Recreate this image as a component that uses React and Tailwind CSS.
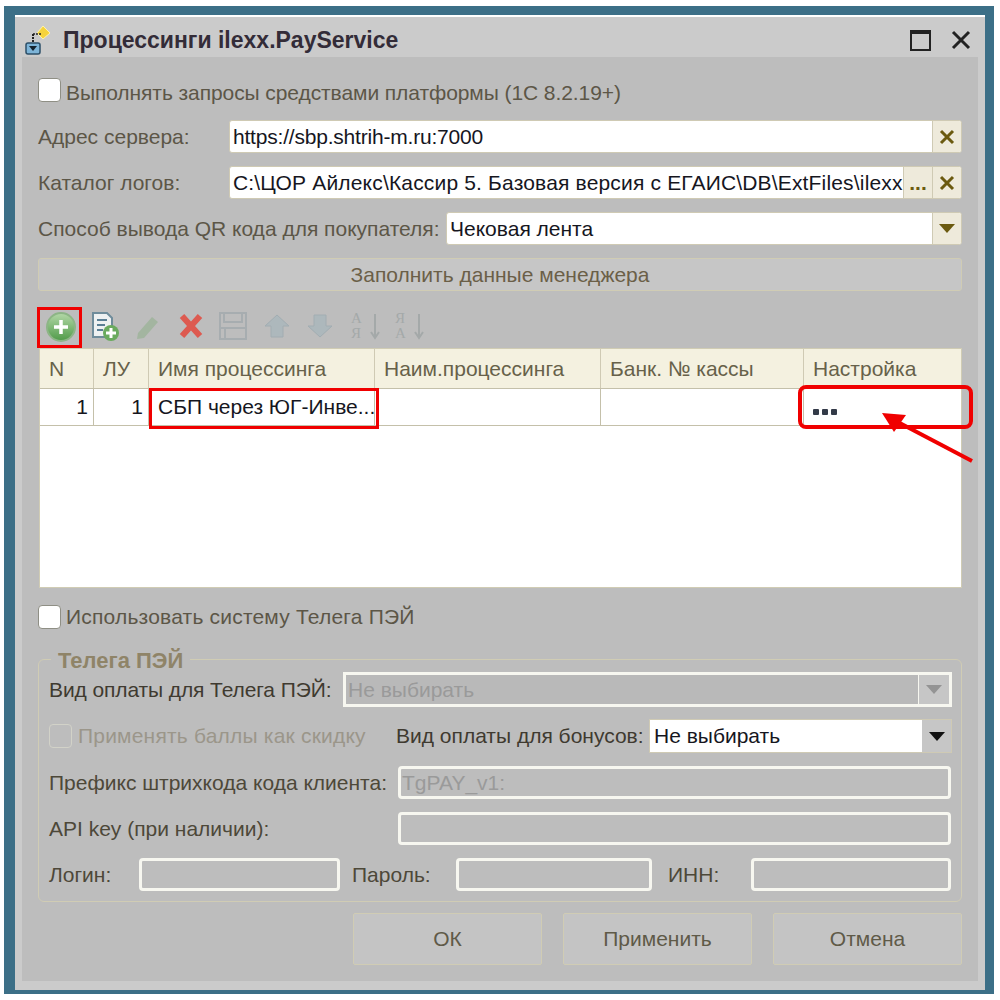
import React from 'react';

const Check = ({ dim }) => (
  <span className={`w-[23px] h-[24px] rounded-[4px] shrink-0 border ${dim ? 'border-[#d2d2c8] bg-[#bdbdbd]' : 'border-[#8f8f85] bg-white'}`} />
);

const SideBtn = ({ children }) => (
  <span className="w-[29px] self-stretch flex items-center justify-center bg-[#eeeadb] border-l border-[#cfcab4]">{children}</span>
);

const ClearIcon = () => (
  <svg width="16" height="16" viewBox="0 0 16 16">
    <path d="M2 2 L14 14 M14 2 L2 14" stroke="#6b5a10" strokeWidth="3" />
  </svg>
);

const Arrow = ({ color = '#6b5a10' }) => (
  <svg width="16" height="9" viewBox="0 0 16 9">
    <path d="M0 0 H16 L8 9 Z" fill={color} />
  </svg>
);

const Disabled = ({ className = '', children }) => (
  <div className={`h-[33px] rounded-[4px] border-[3px] border-[#f7f7f0] bg-[#bdbdbd] px-[1px] flex items-center text-[21px] text-[#9a9a9a] ${className}`}>
    {children}
  </div>
);

const Field = ({ className = '', textClass = '', children, side }) => (
  <div className={`h-[33px] flex items-center bg-white rounded-[3px] border border-[#cfcab4] overflow-hidden ${className}`}>
    <span className={`flex-1 px-[3px] pt-[1px] text-[21px] text-[#16161e] whitespace-nowrap overflow-hidden ${textClass}`}>{children}</span>
    {side}
  </div>
);

const SortIcon = ({ top, bottom, className }) => (
  <div className={`flex items-center ${className}`}>
    <span className="w-[18px] text-[15px] leading-[15px] text-[#a4a9a9] font-['Liberation_Serif',serif]">{top}<br />{bottom}</span>
    <svg width="12" height="28" viewBox="0 0 12 28"><path d="M6 2 V25 M2 20 L6 26 L10 20" stroke="#a4a9a9" strokeWidth="2" fill="none" /></svg>
  </div>
);

const ToolIcons = () => (
  <div className="h-[38px] flex items-center">
    <svg className="ml-[2px]" width="40" height="38" viewBox="0 0 40 38">
      <defs>
        <linearGradient id="plusFill" x1="0" y1="0" x2="0" y2="1">
          <stop offset="0" stopColor="#b4d8a8" />
          <stop offset="1" stopColor="#4f9a48" />
        </linearGradient>
      </defs>
      <circle cx="21" cy="20" r="14" fill="url(#plusFill)" stroke="#8db586" strokeWidth="2" />
      <path d="M21 13 V27 M14 20 H28" stroke="#fff" strokeWidth="3.5" />
    </svg>
    <svg className="ml-[9px]" width="32" height="32" viewBox="0 0 32 32">
      <path d="M4 3 H18 L23 8 V27 H4 Z" fill="#eef1f2" stroke="#6f8c9b" strokeWidth="2" />
      <path d="M8 10 H18 M8 15 H16 M8 20 H14" stroke="#5b7f95" strokeWidth="2" />
      <circle cx="22" cy="23" r="8" fill="#6aaa5e" />
      <path d="M22 18 V28 M17 23 H27" stroke="#fff" strokeWidth="3" />
    </svg>
    <svg className="ml-[12px]" width="28" height="30" viewBox="0 0 28 30">
      <path d="M5 22 L19 6 L25 11 L11 27 L4 28 Z" fill="#a3b5a0" />
    </svg>
    <svg className="ml-[16px]" width="28" height="30" viewBox="0 0 28 30">
      <path d="M5 5 L23 25 M23 5 L5 25" stroke="#dd5a50" strokeWidth="6" />
    </svg>
    <svg className="ml-[13px]" width="30" height="32" viewBox="0 0 30 32" fill="none" stroke="#a7adb0" strokeWidth="2">
      <path d="M2 3 H28 V29 H2 Z" />
      <path d="M6 3 V12 H24 V3 M2 18 H28 M7 18 V29" />
    </svg>
    <svg className="ml-[15px]" width="28" height="28" viewBox="0 0 28 28">
      <path d="M14 3 L26 14 H20 V25 H8 V14 H2 Z" fill="#adb8bc" stroke="#a2adb2" />
    </svg>
    <svg className="ml-[15px]" width="28" height="28" viewBox="0 0 28 28">
      <path d="M14 25 L26 14 H20 V3 H8 V14 H2 Z" fill="#adb8bc" stroke="#a2adb2" />
    </svg>
    <SortIcon top="А" bottom="Я" className="ml-[17px]" />
    <SortIcon top="Я" bottom="А" className="ml-[14px]" />
  </div>
);

const Th = ({ className, children }) => (
  <div className={`h-[39px] flex items-center pl-[9px] border-r border-[#cfcab4] text-[21px] text-[#67614a] whitespace-nowrap ${className}`}>{children}</div>
);

const Td = ({ className = '', children }) => (
  <div className={`h-[37px] flex items-center border-r border-b border-[#c4c0aa] text-[21px] text-[#16161e] whitespace-nowrap ${className}`}>{children}</div>
);

export default function App() {
  return (
    <div className="w-[1000px] h-[1000px] bg-white pt-[6px] pl-[4px] text-[21px] font-['Liberation_Sans',sans-serif]">
      <div className="relative w-[990px] h-[988px] bg-[#3c6f87] pt-[9px] pl-[11px]">
        <div className="w-[970px] h-[975px] bg-[#cbcbcb] border-t-2 border-white">
          {/* title bar */}
          <div className="h-[40px] pt-[6px] flex items-center pl-[8px] pr-[14px]">
            <svg width="32" height="32" viewBox="0 0 32 32">
              <path d="M14 2 L21 9 L14 15 L8 9 Z" transform="translate(6 0)" fill="#f5d33c" stroke="#fff3a8" />
              <path d="M10 10 V20" stroke="#222" strokeWidth="2" strokeDasharray="2 1" />
              <path d="M10 10 H18" stroke="#222" strokeWidth="1.5" strokeDasharray="2 1" />
              <rect x="3" y="19" width="14" height="11" rx="2" fill="#7db4d8" stroke="#2c4f68" strokeWidth="1.5" />
              <path d="M6 22 H14 L10 27 Z" fill="#14222e" />
            </svg>
            <span className="ml-[8px] text-[23px] font-bold text-[#332c38]">Процессинги ilexx.PayService</span>
            <div className="ml-auto flex items-center gap-[20px]">
              <span className="w-[21px] h-[21px] border-2 border-t-[4px] border-[#222]" />
              <svg width="20" height="20" viewBox="0 0 20 20"><path d="M2 2 L18 18 M18 2 L2 18" stroke="#222" strokeWidth="3" /></svg>
            </div>
          </div>

          {/* body */}
          <div className="ml-[7px] w-[956px] h-[924px] bg-[#bdbdbd] pl-[16px] pr-[16px] text-[#5c5647]">
            <div className="h-[63px] pt-[21px] flex items-start gap-[5px]">
              <Check />
              <span className="-mt-[1px] whitespace-nowrap tracking-[-0.08px]">Выполнять запросы средствами платформы (1С 8.2.19+)</span>
            </div>
            <div className="flex flex-col gap-[13px]">
              <div className="flex items-center h-[33px]">
                <span className="w-[191px]">Адрес сервера:</span>
                <Field className="flex-1" textClass="tracking-[-0.2px]" side={<SideBtn><ClearIcon /></SideBtn>}>https://sbp.shtrih-m.ru:7000</Field>
              </div>
              <div className="flex items-center h-[33px]">
                <span className="w-[191px]">Каталог логов:</span>
                <Field className="flex-1" textClass="tracking-[0.17px]" side={<><SideBtn><span className="font-bold text-[#6b5a10] leading-none">...</span></SideBtn><SideBtn><ClearIcon /></SideBtn></>}>
                  C:\ЦОР Айлекс\Кассир 5. Базовая версия с ЕГАИС\DB\ExtFiles\ilexx
                </Field>
              </div>
              <div className="flex items-center h-[33px]">
                <span className="w-[408px] whitespace-nowrap">Способ вывода QR кода для покупателя:</span>
                <Field className="flex-1" side={<SideBtn><Arrow /></SideBtn>}>Чековая лента</Field>
              </div>
              <div className="h-[33px] flex items-center justify-center rounded-[3px] bg-[#c6c6c6] border border-[#d0ccb4] text-[#6b5f48]">
                Заполнить данные менеджера
              </div>
            </div>

            <div className="mt-[16px] mb-[3px]"><ToolIcons /></div>

            {/* table */}
            <div className="ml-[1px] h-[240px] bg-white border border-[#d0ccb4]">
              <div className="flex bg-[#f4f1e0] border-b border-[#c4c0aa]">
                <Th className="w-[54px]">N</Th>
                <Th className="w-[55px]">ЛУ</Th>
                <Th className="w-[226px]">Имя процессинга</Th>
                <Th className="w-[226px]">Наим.процессинга</Th>
                <Th className="w-[203px]">Банк. № кассы</Th>
                <Th className="flex-1 border-r-0">Настройка</Th>
              </div>
              <div className="flex">
                <Td className="w-[54px] justify-end pr-[5px]">1</Td>
                <Td className="w-[55px] justify-end pr-[5px]">1</Td>
                <Td className="w-[226px] pl-[9px]">СБП через ЮГ-Инве...</Td>
                <Td className="w-[226px]" />
                <Td className="w-[203px]" />
                <Td className="flex-1 border-r-0 pl-[9px] pt-[9px] gap-[3px]">
                  <span className="w-[6px] h-[6px] bg-[#333a48] rounded-[1px]" />
                  <span className="w-[6px] h-[6px] bg-[#333a48] rounded-[1px]" />
                  <span className="w-[6px] h-[6px] bg-[#333a48] rounded-[1px]" />
                </Td>
              </div>
            </div>

            <div className="mt-[16px] h-[25px] flex items-center gap-[5px] text-[#5c5647]">
              <Check />
              <span className="tracking-[0.2px]">Использовать систему Телега ПЭЙ</span>
            </div>

            {/* group box */}
            <div className="relative mt-[30px] h-[243px] border border-[#d0ccb4] rounded-[6px] pl-[10px] pr-[9px] pt-[12px]">
              <span className="absolute left-[12px] -top-[16px] px-[7px] bg-[#bdbdbd] text-[22px] font-bold text-[#8f8468]">Телега ПЭЙ</span>
              <div className="flex items-center h-[35px] text-[#3f3a30]">
                <span className="w-[294px] whitespace-nowrap tracking-[-0.1px]">Вид оплаты для Телега ПЭЙ:</span>
                <div className="flex-1 h-[35px] flex border-[3px] border-[#f7f7f0]">
                  <span className="flex-1 pl-[2px] flex items-center text-[#9a9a9a] bg-[#b9b9b9]">Не выбирать</span>
                  <span className="w-[31px] flex items-center justify-center bg-[#c6c6c6] border-l border-[#f7f7f0]"><Arrow color="#949494" /></span>
                </div>
              </div>
              <div className="flex items-center h-[34px] mt-[12px]">
                <Check dim />
                <span className="ml-[6px] w-[318px] text-[#9b968a] whitespace-nowrap tracking-[0.2px]">Применять баллы как скидку</span>
                <span className="w-[253px] text-[#3f3a30] whitespace-nowrap">Вид оплаты для бонусов:</span>
                <div className="flex-1 h-[34px] flex bg-white border border-[#cfcab4]">
                  <span className="flex-1 pl-[4px] flex items-center text-[#16161e]">Не выбирать</span>
                  <span className="w-[29px] flex items-center justify-center bg-[#c6c6c6]"><Arrow color="#111" /></span>
                </div>
              </div>
              <div className="flex items-center mt-[13px]">
                <span className="w-[349px] text-[#4d4839] whitespace-nowrap">Префикс штрихкода кода клиента:</span>
                <Disabled className="flex-1 mr-[1px]">TgPAY_v1:</Disabled>
              </div>
              <div className="flex items-center mt-[13px]">
                <span className="w-[349px] text-[#4d4839]">API key (при наличии):</span>
                <Disabled className="flex-1 mr-[1px]" />
              </div>
              <div className="flex items-center mt-[13px] text-[#4d4839]">
                <span className="w-[90px]">Логин:</span>
                <Disabled className="w-[201px]" />
                <span className="w-[116px] pl-[12px] whitespace-nowrap">Пароль:</span>
                <Disabled className="w-[196px]" />
                <span className="w-[99px] pl-[16px]">ИНН:</span>
                <Disabled className="flex-1 mr-[1px]" />
              </div>
            </div>

            <div className="mt-[11px] flex justify-end gap-[21px] text-[#5f5a48]">
              <div className="w-[189px] h-[52px] flex items-center justify-center bg-[#c4c4c4] border border-[#d0ccb4] rounded-[2px]">ОК</div>
              <div className="w-[189px] h-[52px] flex items-center justify-center bg-[#c4c4c4] border border-[#d0ccb4] rounded-[2px]">Применить</div>
              <div className="w-[189px] h-[52px] flex items-center justify-center bg-[#c4c4c4] border border-[#d0ccb4] rounded-[2px]">Отмена</div>
            </div>
          </div>
        </div>

        {/* annotations */}
        <div className="absolute left-[33px] top-[301px] w-[45px] h-[41px] border-[3px] border-[#f00000]" />
        <div className="absolute left-[145px] top-[382px] w-[230px] h-[41px] border-[3px] border-[#f00000]" />
        <div className="absolute left-[794px] top-[379px] w-[175px] h-[44px] border-[4px] border-[#f00000] rounded-[8px]" />
        <svg className="absolute left-[870px] top-[400px]" width="110" height="70" viewBox="0 0 110 70">
          <path d="M98 55 L18 13" stroke="#f00000" strokeWidth="4" />
          <path d="M8 7 L32 9 L20 26 Z" fill="#f00000" />
        </svg>
      </div>
    </div>
  );
}
